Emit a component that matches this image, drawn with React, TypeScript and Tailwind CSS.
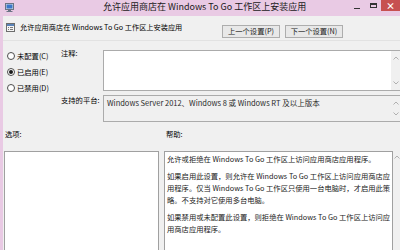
import React from 'react';

const TitleIcon = () => (
  <svg width="9" height="9" viewBox="0 0 9 9">
    <rect x="0.5" y="0.5" width="8" height="6" fill="#d8dde6" stroke="#6b7585" />
    <rect x="1.5" y="1.5" width="6" height="4" fill="#3a78c9" />
    <rect x="3" y="7" width="3" height="1" fill="#6b7585" />
    <rect x="1.5" y="8" width="6" height="1" fill="#6b7585" />
  </svg>
);

const PolicyIcon = () => (
  <svg width="9" height="9" viewBox="0 0 9 9">
    <rect x="0.5" y="0.5" width="8" height="8" fill="#f4f4f4" stroke="#6d6d6d" />
    <rect x="1" y="1" width="7" height="2" fill="#5a83b8" />
    <rect x="2" y="4" width="1" height="1" fill="#7a7a7a" />
    <rect x="4" y="4" width="3" height="1" fill="#7a7a7a" />
    <rect x="2" y="6" width="1" height="1" fill="#7a7a7a" />
    <rect x="4" y="6" width="3" height="1" fill="#7a7a7a" />
  </svg>
);

const Up = () => (
  <svg width="6" height="4" viewBox="0 0 6 4">
    <path d="M0.5 3.5 L3 1 L5.5 3.5" fill="none" stroke="#b0b0b0" strokeWidth="1" />
  </svg>
);

const Down = () => (
  <svg width="6" height="4" viewBox="0 0 6 4">
    <path d="M0.5 0.5 L3 3 L5.5 0.5" fill="none" stroke="#b0b0b0" strokeWidth="1" />
  </svg>
);

const Radio = ({ checked, label }: { checked?: boolean; label: string }) => (
  <div className="h-[16px] flex items-center gap-[2px]">
    <div className="w-[8px] h-[8px] rounded-full border border-[#4d4d4d] bg-white flex items-center justify-center">
      {checked && <div className="w-[4px] h-[4px] rounded-full bg-[#1a1a1a]" />}
    </div>
    <span className="leading-[10px]">{label}</span>
  </div>
);

export default function App() {
  return (
    <div className="w-[400px] h-[250px] overflow-hidden bg-[#e9cae4] flex flex-col font-['Noto_Sans_CJK_SC',sans-serif] text-[7.3px] text-black">
      {/* title bar */}
      <div className="h-[16px] shrink-0 flex items-start">
        <div className="pl-[5px] pt-[3px]">
          <TitleIcon />
        </div>
        <div className="flex-1 pl-[89px] text-[9px] leading-[14px] text-[#1a1a1a] whitespace-nowrap">
          允许应用商店在 Windows To Go 工作区上安装应用
        </div>
        <div className="flex items-start">
          <div className="w-[16px] h-[11px] flex items-center justify-center">
            <div className="w-[6px] h-[1px] bg-[#333] mt-[5px]" />
          </div>
          <div className="w-[16px] h-[11px] flex items-center justify-center">
            <div className="w-[7px] h-[5px] border border-[#333] border-t-2" />
          </div>
          <div className="w-[19px] h-[11px] bg-[#c75050] flex items-center justify-center text-white text-[9px] leading-[11px] font-bold">
            ×
          </div>
        </div>
      </div>

      <div className="flex-1 min-h-0 ml-[3px] bg-[#f0f0f0] flex flex-col">
        {/* header row */}
        <div className="h-[25px] shrink-0 flex items-start border-b border-[#e2e2e2] pl-[3px] pr-[57px]">
          <div className="mt-[7px]">
            <PolicyIcon />
          </div>
          <div className="ml-[5px] mt-[6px] leading-[10px] text-[7.2px] whitespace-nowrap">
            允许应用商店在 Windows To Go 工作区上安装应用
          </div>
          <div className="ml-auto mt-[9px] flex gap-[5px]">
            <button className="w-[58px] h-[13px] border border-[#adadad] bg-[#e8e8e8] text-[7.3px] leading-[11px] text-[#1a1a1a]">
              上一个设置(P)
            </button>
            <button className="w-[58px] h-[13px] border border-[#adadad] bg-[#e8e8e8] text-[7.3px] leading-[11px] text-[#1a1a1a]">
              下一个设置(N)
            </button>
          </div>
        </div>

        {/* settings area */}
        <div className="shrink-0 flex">
          <div className="w-[58px] pt-[7px] pl-[4px]">
            <Radio label="未配置(C)" />
            <Radio checked label="已启用(E)" />
            <Radio label="已禁用(D)" />
          </div>
          <div className="flex-1 pt-[9px] flex flex-col">
            <div className="h-[41px] flex">
              <div className="w-[42px] leading-[6px]">注释:</div>
              <div className="flex-1 flex bg-white border-y border-l border-[#ababab]">
                <div className="flex-1" />
                <div className="w-[9px] bg-[#f0f0f0] flex flex-col items-center justify-between py-[5px]">
                  <Up />
                  <Down />
                </div>
              </div>
            </div>
            <div className="mt-[4px] h-[27px] flex">
              <div className="w-[42px] leading-[10px] whitespace-nowrap">支持的平台:</div>
              <div className="flex-1 flex border-y border-l border-[#ababab] bg-[#f0f0f0]">
                <div className="flex-1 pl-[3px] pt-[2px] leading-[10px] text-[7.5px] text-[#2a2a2a] whitespace-nowrap">
                  Windows Server 2012、Windows 8 或 Windows RT 及以上版本
                </div>
                <div className="w-[9px] flex flex-col items-center justify-between py-[5px]">
                  <Up />
                  <Down />
                </div>
              </div>
            </div>
          </div>
        </div>

        {/* labels */}
        <div className="h-[29px] shrink-0 flex pt-[7px] leading-[10px]">
          <div className="w-[163px] pl-[2px]">选项:</div>
          <div>帮助:</div>
        </div>

        {/* options and help */}
        <div className="flex-1 min-h-0 flex">
          <div className="ml-[1px] w-[155px] bg-white border-t border-x border-[#a0a0a0]" />
          <div className="ml-[5px] w-[229px] overflow-hidden bg-white border-t border-x border-[#a0a0a0] pt-[1px] px-[2px] leading-[12px] text-[7.3px] text-[#222] whitespace-nowrap">
            <p className="mb-[5px]">允许或拒绝在 Windows To Go 工作区上访问应用商店应用程序。</p>
            <p className="mb-[5px]">
              如果启用此设置，则允许在 Windows To Go 工作区上访问应用商店应
              <br />
              用程序。仅当 Windows To Go 工作区只使用一台电脑时，才启用此策
              <br />
              略。不支持对它使用多台电脑。
            </p>
            <p>
              如果禁用或未配置此设置，则拒绝在 Windows To Go 工作区上访问应
              <br />
              用商店应用程序。
            </p>
          </div>
          <div className="w-[7px] flex justify-center pt-[4px]">
            <Up />
          </div>
        </div>
      </div>
    </div>
  );
}
